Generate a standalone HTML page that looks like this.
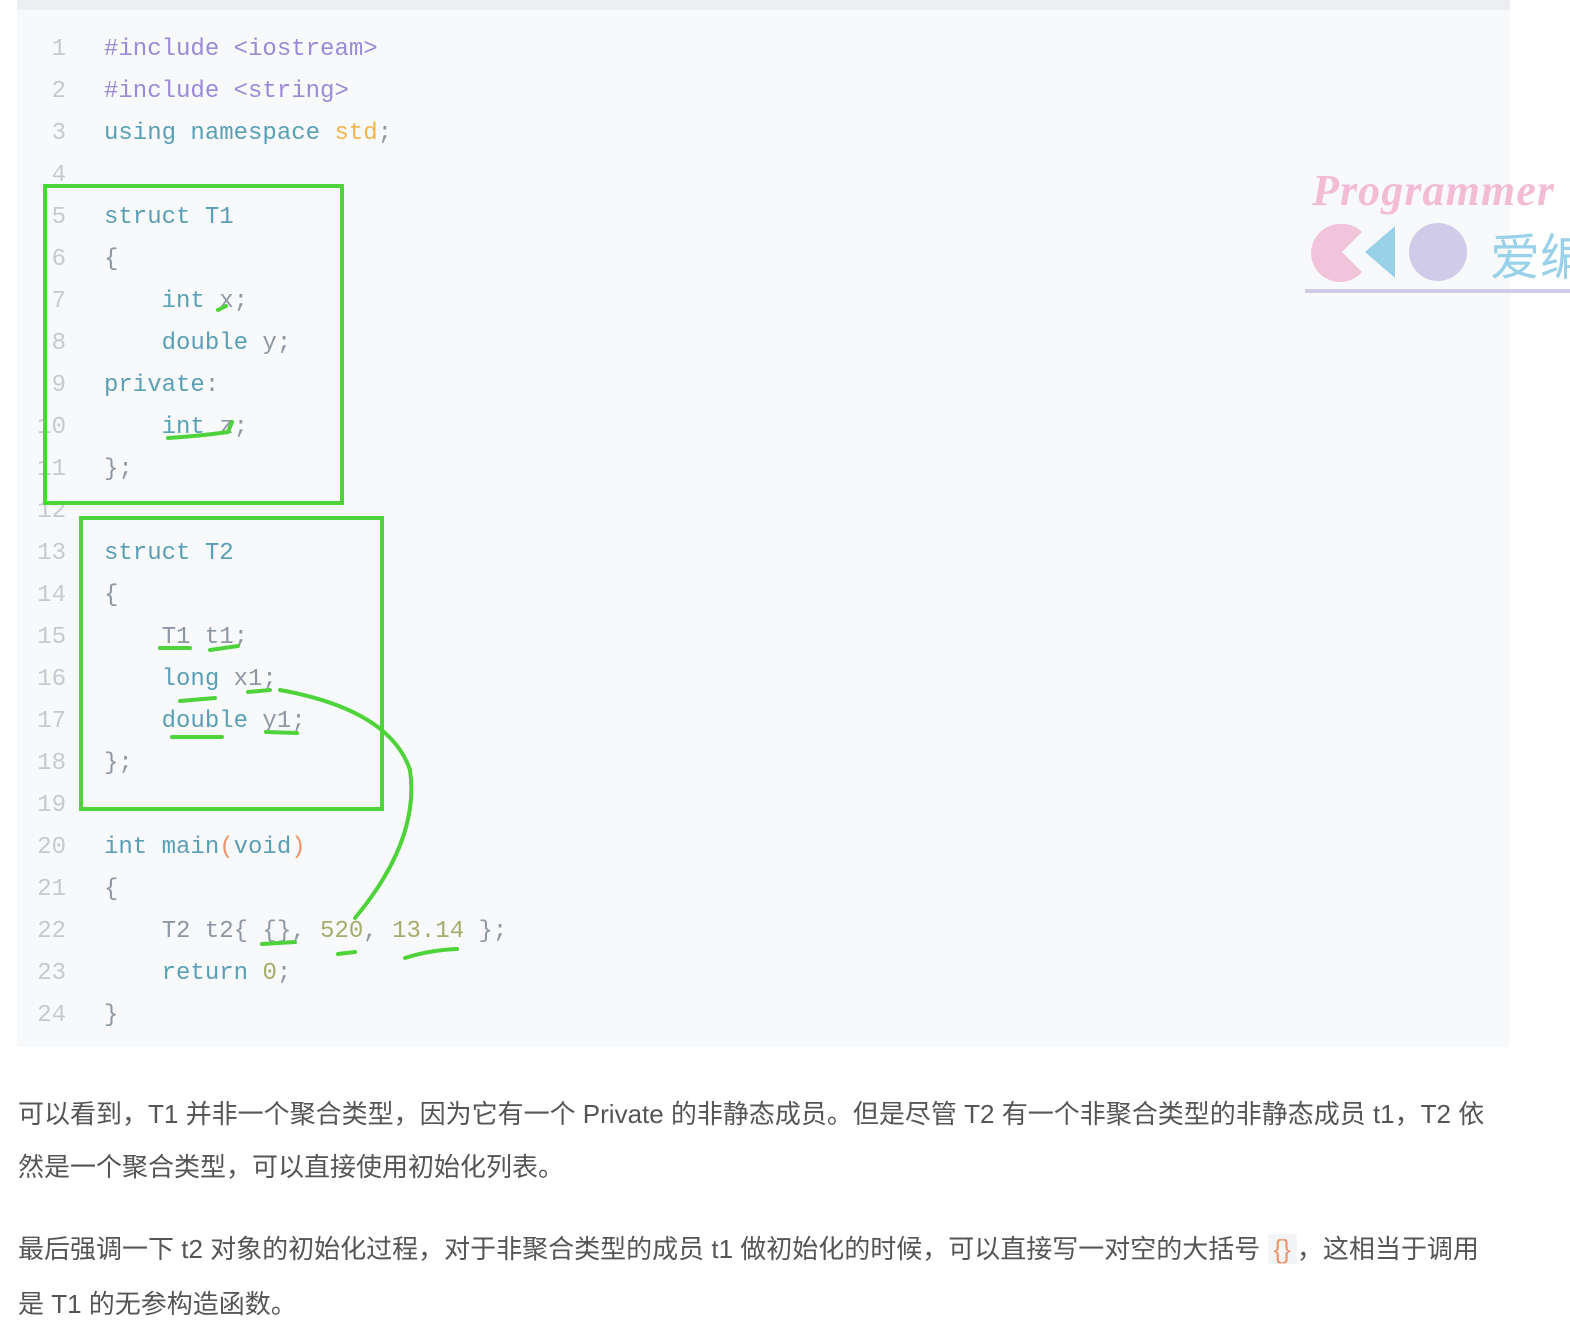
<!DOCTYPE html>
<html><head><meta charset="utf-8"><style>
body{margin:0;width:1570px;height:1344px;background:#fff;position:relative;overflow:hidden;font-family:"Liberation Sans","Noto Sans CJK SC",sans-serif}
.top{position:absolute;left:17px;top:0;width:1493px;height:10px;background:#eceef2}
.code{position:absolute;left:17px;top:10px;width:1493px;height:1037px;background:#f8f9fb}
.ln{position:absolute;left:17px;width:49px;text-align:right;font:24px "Liberation Mono",monospace;color:#c5cad0;margin-top:3px}
.cl{position:absolute;left:104px;font:24px "Liberation Mono",monospace;color:#8d98a4;white-space:pre;margin-top:3px}
.p{color:#9c8ad6}.k{color:#5a9fb5}.s{color:#f1b54e}.n{color:#a7ab6c}.o{color:#e8956b}
.t{position:absolute;left:18px;font-size:26px;color:#555;white-space:nowrap}
.ic{background:#f3f4f6;color:#e8956b;padding:0 6px}
</style></head><body>
<div class="top"></div><div class="code"></div>
<div class="ln" style="top:33px">1</div><div class="cl" style="top:33px"><span class="p">#include &lt;iostream&gt;</span></div>
<div class="ln" style="top:75px">2</div><div class="cl" style="top:75px"><span class="p">#include &lt;string&gt;</span></div>
<div class="ln" style="top:117px">3</div><div class="cl" style="top:117px"><span class="k">using namespace</span> <span class="s">std</span>;</div>
<div class="ln" style="top:159px">4</div>
<div class="ln" style="top:201px">5</div><div class="cl" style="top:201px"><span class="k">struct T1</span></div>
<div class="ln" style="top:243px">6</div><div class="cl" style="top:243px">{</div>
<div class="ln" style="top:285px">7</div><div class="cl" style="top:285px">    <span class="k">int</span> x;</div>
<div class="ln" style="top:327px">8</div><div class="cl" style="top:327px">    <span class="k">double</span> y;</div>
<div class="ln" style="top:369px">9</div><div class="cl" style="top:369px"><span class="k">private</span>:</div>
<div class="ln" style="top:411px">10</div><div class="cl" style="top:411px">    <span class="k">int</span> z;</div>
<div class="ln" style="top:453px">11</div><div class="cl" style="top:453px">};</div>
<div class="ln" style="top:495px">12</div>
<div class="ln" style="top:537px">13</div><div class="cl" style="top:537px"><span class="k">struct T2</span></div>
<div class="ln" style="top:579px">14</div><div class="cl" style="top:579px">{</div>
<div class="ln" style="top:621px">15</div><div class="cl" style="top:621px">    T1 t1;</div>
<div class="ln" style="top:663px">16</div><div class="cl" style="top:663px">    <span class="k">long</span> x1;</div>
<div class="ln" style="top:705px">17</div><div class="cl" style="top:705px">    <span class="k">double</span> y1;</div>
<div class="ln" style="top:747px">18</div><div class="cl" style="top:747px">};</div>
<div class="ln" style="top:789px">19</div>
<div class="ln" style="top:831px">20</div><div class="cl" style="top:831px"><span class="k">int main</span><span class="o">(</span><span class="k">void</span><span class="o">)</span></div>
<div class="ln" style="top:873px">21</div><div class="cl" style="top:873px">{</div>
<div class="ln" style="top:915px">22</div><div class="cl" style="top:915px">    T2 t2{ {}, <span class="n">520</span>, <span class="n">13.14</span> };</div>
<div class="ln" style="top:957px">23</div><div class="cl" style="top:957px">    <span class="k">return</span> <span class="n">0</span>;</div>
<div class="ln" style="top:999px">24</div><div class="cl" style="top:999px">}</div>

<svg style="position:absolute;left:0;top:0" width="1570" height="1344">
<g fill="none" stroke="#4fd33a" stroke-width="4" stroke-linecap="round">
<rect x="45" y="186" width="297" height="317"/>
<rect x="81" y="518" width="301" height="291"/>
<path d="M218 310 L226 306"/><path d="M168 438 Q200 436 228 432 L232 422"/>
<path d="M160 648 L190 648 M210 650 L238 646"/><path d="M180 701 L215 698 M248 692 L270 690"/>
<path d="M172 737 L222 737 M266 732 L297 733"/>
<path d="M280 690 Q390 710 410 770 Q420 840 355 918"/>
<path d="M262 944 L295 942 M338 954 L355 952 M405 958 Q430 950 457 949"/>
</g>
<g opacity="0.9">
<text x="1312" y="205" font-family="Liberation Serif" font-style="italic" font-weight="bold" font-size="44" fill="#f1b6d0" textLength="242">Programmer</text>
<path d="M1340 224 a29 29 0 1 0 22 48 l-20 -20 l20 -20 a29 29 0 0 0 -22 -8z" fill="#f1bfd6"/>
<path d="M1395 226 l-30 26 l30 26 z" fill="#8fcde8"/>
<circle cx="1438" cy="252" r="29" fill="#cbc7e6"/>
<text x="1490" y="275" font-family="Noto Sans CJK SC" font-size="50" fill="#8fcde8">爱编</text>
<rect x="1305" y="289" width="265" height="4" fill="#cbc7e6"/>
</g>
</svg>

<div class="t" style="top:1094px">可以看到，T1 并非一个聚合类型，因为它有一个 Private 的非静态成员。但是尽管 T2 有一个非聚合类型的非静态成员 t1，T2 依</div>
<div class="t" style="top:1147px">然是一个聚合类型，可以直接使用初始化列表。</div>
<div class="t" style="top:1229px">最后强调一下 t2 对象的初始化过程，对于非聚合类型的成员 t1 做初始化的时候，可以直接写一对空的大括号 <span class="ic">{}</span>，这相当于调用</div>
<div class="t" style="top:1284px">是 T1 的无参构造函数。</div>
</body></html>
